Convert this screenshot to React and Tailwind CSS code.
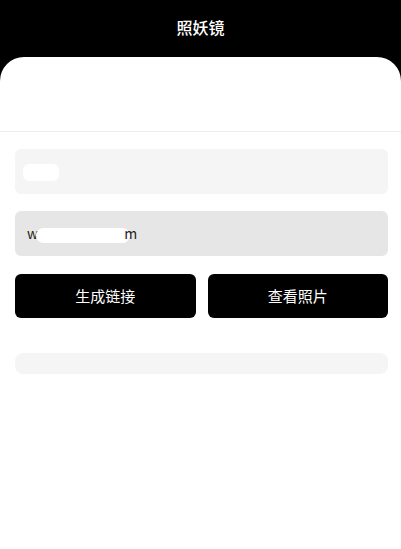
export default function App() {
  const font = { fontFamily: '"Noto Sans CJK SC", "Noto Sans", sans-serif' };

  return (
    <div className="min-h-[549px] bg-black" style={font}>
      {/* 顶部标题 */}
      <div className="h-[57px] flex items-center justify-center">
        <h1 className="text-white text-[16px] font-medium -mt-[4px]">照妖镜</h1>
      </div>

      {/* 内容卡片 */}
      <div className="bg-white rounded-t-[24px] min-h-[492px]">
        <div className="h-[75px] border-b border-[#eeeeee]"></div>

        <div className="pl-[15px] pr-[13px] pt-[17px] flex flex-col">
          <div className="h-[45px] bg-[#f5f5f5] rounded-[6px] flex items-center px-[8px]">
            <span className="w-[36px] h-[17px] bg-white rounded-[6px] mt-[2px]"></span>
          </div>

          <div className="h-[45px] bg-[#e6e6e6] rounded-[6px] flex items-center px-[12px] mt-[17px] text-[14px] text-[#222]">
            <span>w</span>
            <span className="w-[94px] h-[15px] bg-white rounded-full -ml-[2px] mt-[3px]"></span>
            <span className="-ml-[6px]">m</span>
          </div>

          <div className="flex gap-[12px] mt-[18px]">
            <button className="flex-1 h-[44px] bg-black text-white text-[15px] rounded-[6px]">生成链接</button>
            <button className="flex-1 h-[44px] bg-black text-white text-[15px] rounded-[6px]">查看照片</button>
          </div>

          <div className="h-[21px] bg-[#f5f5f5] rounded-[8px] mt-[35px]"></div>
        </div>
      </div>
    </div>
  );
}
